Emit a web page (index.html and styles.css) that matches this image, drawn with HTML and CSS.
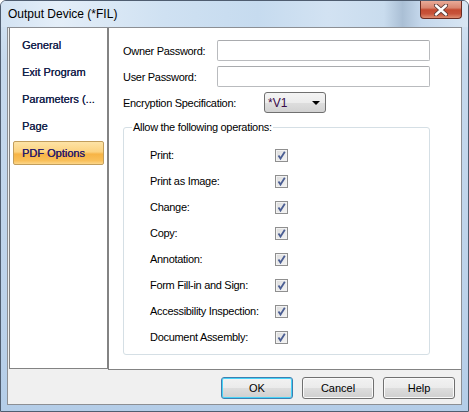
FILE: index.html
```html
<!DOCTYPE html>
<html lang="en">
<head>
    <meta charset="UTF-8">
    <meta name="viewport" content="width=device-width, initial-scale=1.0">
    <title>Output Device (*FIL)</title>
    <link rel="stylesheet" href="styles.css">
</head>
<body>
    <div class="window">
        <div class="titlebar">
            <span class="title">Output Device (*FIL)</span>
            <button class="close-btn" type="button" aria-label="Close">
                <svg width="14" height="12" viewBox="0 0 14 12">
                    <path d="M2 1.5 L12 10.5 M12 1.5 L2 10.5" stroke="#5a3a36" stroke-width="4.2" stroke-linecap="round"/>
                    <path d="M2 1.5 L12 10.5 M12 1.5 L2 10.5" stroke="#ffffff" stroke-width="2.4" stroke-linecap="round"/>
                </svg>
            </button>
        </div>
        <div class="client">
            <div class="main">
                <ul class="nav">
                    <li class="nav-item">General</li>
                    <li class="nav-item">Exit Program</li>
                    <li class="nav-item">Parameters (...</li>
                    <li class="nav-item">Page</li>
                    <li class="nav-item active">PDF Options</li>
                </ul>
                <div class="content">
                    <div class="field">
                        <label class="field-label">Owner Password:</label>
                        <input class="text-input" type="password">
                    </div>
                    <div class="field">
                        <label class="field-label">User Password:</label>
                        <input class="text-input" type="password">
                    </div>
                    <div class="field field-combo">
                        <label class="field-label wide">Encryption Specification:</label>
                        <div class="combo">
                            <span class="combo-value">*V1</span>
                            <span class="combo-arrow"></span>
                        </div>
                    </div>
                    <fieldset class="group">
                        <legend class="group-title">Allow the following operations:</legend>
                        <div class="check-list">
                            <!-- rows filled below -->
                        </div>
                    </fieldset>
                </div>
            </div>
            <div class="buttons">
                <button class="btn default" type="button">OK</button>
                <button class="btn" type="button">Cancel</button>
                <button class="btn" type="button">Help</button>
            </div>
        </div>
    </div>

    <script>
        const operations = ['Print:', 'Print as Image:', 'Change:', 'Copy:', 'Annotation:',
            'Form Fill-in and Sign:', 'Accessibility Inspection:', 'Document Assembly:'];
        const list = document.querySelector('.check-list');
        operations.forEach(op => {
            list.insertAdjacentHTML('beforeend',
                '<div class="check-row"><span class="check-label">' + op + '</span>' +
                '<span class="check"><svg width="11" height="11" viewBox="0 0 11 11">' +
                '<path d="M2.5 5.5 L4.5 8.5 L8.8 1.8" fill="none" stroke="#4b5e93" stroke-width="1.8"/></svg></span></div>');
        });
    </script>
</body>
</html>
```

FILE: styles.css
```css
* {
    box-sizing: border-box;
}
body {
    margin: 0;
    font-family: "Liberation Sans", Arial, sans-serif;
    font-size: 11px;
    background: #ffffff;
}
.window {
    width: 469px;
    height: 412px;
    border: 1px solid #4f5d70;
    border-radius: 6px 6px 0 0;
    background: linear-gradient(to bottom, #d6e5f4 0px, #c6d9ed 60px, #bcd2ea 300px, #b4cde8 100%);
    display: flex;
    flex-direction: column;
}
.titlebar {
    height: 26px;
    display: flex;
    justify-content: space-between;
    align-items: center;
    padding-left: 7px;
    border-radius: 5px 5px 0 0;
    background: linear-gradient(to right, #d3e3f3 0%, #e4eef8 12%, #cfe1f2 35%, #c6dbef 55%, #d2e2f2 70%, #c9dcee 82%, #aabfd5 86%, #c5d8ec 90%, #d8e6f3 100%);
}
.title {
    font-size: 12px;
    color: #000;
}
.close-btn {
    align-self: flex-start;
    width: 42px;
    height: 18px;
    margin-right: 6px;
    padding: 0;
    border: 1px solid #6b2c22;
    border-top: none;
    border-radius: 0 0 4px 4px;
    background: linear-gradient(to bottom, #e9ab98 0%, #d98670 40%, #c44a30 52%, #c7533a 75%, #df8d70 100%);
    display: flex;
    align-items: center;
    justify-content: center;
}
.client {
    margin: 0 6px;
    height: 378px;
    border: 1px solid #8c8f94;
    background: #f0f0f0;
    display: flex;
    flex-direction: column;
}
.main {
    display: flex;
    height: 342px;
}
.nav {
    list-style: none;
    margin: 0 0 1px 1px;
    padding: 5px 3px 0 3px;
    width: 99px;
    border: 1px solid #838383;
    border-top: none;
    background: #fff;
    display: flex;
    flex-direction: column;
    gap: 3px;
}
.nav-item {
    height: 24px;
    line-height: 22px;
    padding-left: 8px;
    border: 1px solid transparent;
    color: #14224a;
    text-shadow: 0.15px 0 0 #14224a;
    white-space: nowrap;
}
.nav-item.active {
    border-color: #c29e5c;
    border-radius: 2px;
    color: #2a1a6a;
    text-shadow: 0.15px 0 0 #2a1a6a;
    background: linear-gradient(to bottom, #fde3a6 0%, #fcd27f 45%, #f7b445 55%, #f9c05a 85%, #fcd68a 100%);
}
.content {
    flex: 1;
    background: #fff;
    border-left: 1px solid #838383;
    border-bottom: 1px solid #838383;
    padding: 12px 0 0 14px;
}
.field {
    display: flex;
    align-items: center;
    height: 21px;
    margin-bottom: 5px;
}
.field-combo {
    margin-top: 2px;
    margin-bottom: 8px;
}
.field-label {
    width: 94px;
    letter-spacing: -0.3px;
}
.field-label.wide {
    width: 141px;
}
.text-input {
    width: 213px;
    height: 21px;
    border: 1px solid #b9bbbe;
    border-top-color: #a9abae;
    border-radius: 2px;
    background: #fff;
}
.combo {
    width: 62px;
    height: 21px;
    border: 1px solid #707070;
    border-radius: 3px;
    background: linear-gradient(to bottom, #f4f4f4 0%, #ececec 50%, #dedede 52%, #d2d2d2 100%);
    display: flex;
    align-items: center;
    justify-content: space-between;
    padding: 0 5px 0 3px;
}
.combo-value {
    color: #3a0a4a;
    font-size: 12px;
}
.combo-arrow {
    width: 0;
    height: 0;
    border-left: 4px solid transparent;
    border-right: 4px solid transparent;
    border-top: 4px solid #000;
}
.group {
    width: 307px;
    margin: 0;
    padding: 0 0 4px 8px;
    border: 1px solid #d5dfe5;
    border-radius: 3px;
}
.group-title {
    padding: 0 1px;
    line-height: 13px;
    letter-spacing: -0.3px;
}
.check-list {
    padding: 8px 0 0 18px;
}
.check-row {
    display: flex;
    align-items: center;
    height: 26px;
}
.check-label {
    width: 125px;
    letter-spacing: -0.3px;
}
.check {
    width: 13px;
    height: 13px;
    border: 1px solid #8f8f8f;
    background: linear-gradient(to bottom right, #dcdcdc, #f4f4f4);
    display: flex;
    align-items: center;
    justify-content: center;
    box-shadow: inset 0 0 0 1px #f2f2f2;
}
.buttons {
    display: flex;
    justify-content: flex-end;
    gap: 9px;
    padding: 7px 6px 0 0;
}
.btn {
    width: 72px;
    height: 22px;
    padding: 0;
    font-family: "Liberation Sans", Arial, sans-serif;
    font-size: 11px;
    color: #000;
    border: 1px solid #707070;
    border-radius: 3px;
    background: linear-gradient(to bottom, #f2f2f2 0%, #ebebeb 48%, #dddddd 52%, #cfcfcf 100%);
    box-shadow: inset 0 0 0 1px #fafafa;
}
.btn.default {
    border-color: #3c7fb1;
    box-shadow: inset 0 0 0 1px #48d3f8;
}
```
